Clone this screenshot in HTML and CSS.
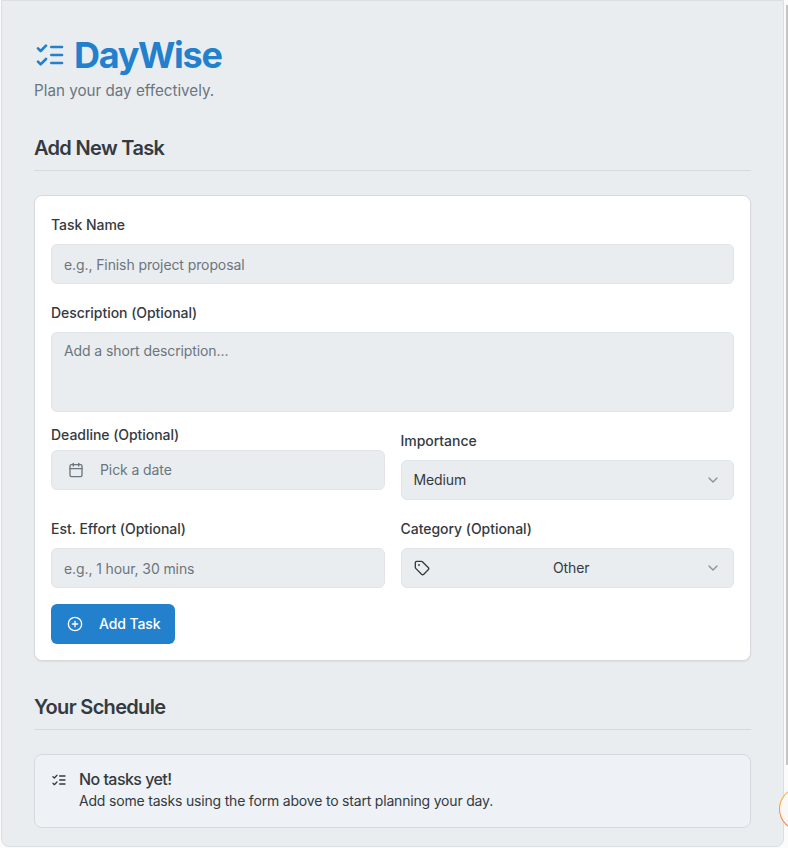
FILE: index.html
```html
<!DOCTYPE html>
<html lang="en">
<head>
<meta charset="utf-8">
<title>DayWise</title>
<link rel="stylesheet" href="styles.css">
</head>
<body>
<div class="frame">
  <main class="app">
    <header class="brand">
      <h1 class="brand-title">
        <svg class="brand-icon" viewBox="0 0 24 24" fill="none" stroke="currentColor" stroke-width="2" stroke-linecap="round" stroke-linejoin="round"><path d="m3 17 2 2 4-4"/><path d="m3 7 2 2 4-4"/><path d="M13 6h8"/><path d="M13 12h8"/><path d="M13 18h8"/></svg>
        DayWise
      </h1>
      <p class="brand-sub">Plan your day effectively.</p>
    </header>

    <h2 class="section-title">Add New Task</h2>
    <form class="card">
      <div class="field">
        <label class="label">Task Name</label>
        <div class="input placeholder">e.g., Finish project proposal</div>
      </div>
      <div class="field spaced">
        <label class="label">Description (Optional)</label>
        <div class="input textarea placeholder">Add a short description...</div>
      </div>
      <div class="row row-first">
        <div class="field deadline">
          <label class="label">Deadline (Optional)</label>
          <div class="input placeholder date">
            <svg class="ico" viewBox="0 0 24 24" fill="none" stroke="currentColor" stroke-width="2" stroke-linecap="round" stroke-linejoin="round"><path d="M8 2v4"/><path d="M16 2v4"/><rect x="3" y="4" width="18" height="18" rx="2"/><path d="M3 10h18"/></svg>
            <span class="lift">Pick a date</span>
          </div>
        </div>
        <div class="field importance">
          <label class="label">Importance</label>
          <div class="input select">
            <span class="lift">Medium</span>
            <svg class="chev" viewBox="0 0 24 24" fill="none" stroke="currentColor" stroke-width="2" stroke-linecap="round" stroke-linejoin="round"><path d="m6 9 6 6 6-6"/></svg>
          </div>
        </div>
      </div>
      <div class="row spaced">
        <div class="field">
          <label class="label">Est. Effort (Optional)</label>
          <div class="input placeholder">e.g., 1 hour, 30 mins</div>
        </div>
        <div class="field">
          <label class="label">Category (Optional)</label>
          <div class="input select">
            <svg class="ico tag" viewBox="0 0 24 24" fill="none" stroke="currentColor" stroke-width="2" stroke-linecap="round" stroke-linejoin="round"><path d="M12.586 2.586A2 2 0 0 0 11.172 2H4a2 2 0 0 0-2 2v7.172a2 2 0 0 0 .586 1.414l8.704 8.704a2.426 2.426 0 0 0 3.42 0l6.58-6.58a2.426 2.426 0 0 0 0-3.42z"/><circle cx="7.5" cy="7.5" r=".5" fill="currentColor"/></svg>
            <span class="grow lift">Other</span>
            <svg class="chev" viewBox="0 0 24 24" fill="none" stroke="currentColor" stroke-width="2" stroke-linecap="round" stroke-linejoin="round"><path d="m6 9 6 6 6-6"/></svg>
          </div>
        </div>
      </div>
      <button class="btn" type="button">
        <svg class="ico" viewBox="0 0 24 24" fill="none" stroke="currentColor" stroke-width="2" stroke-linecap="round" stroke-linejoin="round"><circle cx="12" cy="12" r="10"/><path d="M8 12h8"/><path d="M12 8v8"/></svg>
        <span class="lift">Add Task</span>
      </button>
    </form>

    <h2 class="section-title second">Your Schedule</h2>
    <div class="alert">
      <svg class="alert-icon" viewBox="0 0 24 24" fill="none" stroke="currentColor" stroke-width="2" stroke-linecap="round" stroke-linejoin="round"><path d="m3 17 2 2 4-4"/><path d="m3 7 2 2 4-4"/><path d="M13 6h8"/><path d="M13 12h8"/><path d="M13 18h8"/></svg>
      <div>
        <div class="alert-title">No tasks yet!</div>
        <div class="alert-text">Add some tasks using the form above to start planning your day.</div>
      </div>
    </div>
  </main>
  <aside class="side">
    <span class="scroll-thumb"></span>
    <span class="orb"></span>
  </aside>
</div>
</body>
</html>
```

FILE: styles.css
```css
* { box-sizing: border-box; }
html, body { margin: 0; height: 100%; }
body {
  background: #fbfbfb;
  font-family: Inter, "Liberation Sans", sans-serif;
  color: #343a40;
  overflow: hidden;
}
.frame { display: flex; height: 848px; width: 788px; padding-left: 1px; }
.app {
  width: 783px;
  height: 847px;
  flex: none;
  background: #e9edf0;
  border: 1px solid #dcdfe2;
  border-radius: 0 0 8px 8px;
  padding: 34px 32px 0 32px;
}
.brand-title {
  margin: 0;
  display: flex;
  align-items: center;
  gap: 8px;
  font-size: 36px;
  line-height: 40px;
  font-weight: 700;
  letter-spacing: -1.3px;
  color: #2280cd;
}
.brand-icon { width: 32px; height: 32px; flex: none; }
.brand-sub { margin: 4px 0 0; font-size: 15.2px; line-height: 24px; color: #6c757d; }
.section-title {
  margin: 31px 0 24px;
  padding-bottom: 8px;
  border-bottom: 1px solid #d6dade;
  font-size: 20px;
  line-height: 28px;
  font-weight: 600;
  letter-spacing: -0.68px;
  color: #343a40;
  width: 717px;
}
.section-title.second { margin-top: 32px; }
.card {
  width: 717px;
  background: #fff;
  border: 1px solid #d6dade;
  border-radius: 8px;
  padding: 22px 16px 16px;
  box-shadow: 0 1px 2px rgba(0,0,0,.06);
  display: flex;
  flex-direction: column;
}
.field { display: flex; flex-direction: column; gap: 12px; flex: 1 1 0; min-width: 0; }
.spaced { margin-top: 22px; }
.label { font-size: 14px; line-height: 14px; font-weight: 450; letter-spacing: -0.04px; color: #343a40; }
.input {
  height: 40px;
  background: #e9edf0;
  border: 1px solid #e1e5e9;
  border-radius: 6px;
  padding: 0 12px;
  display: flex;
  align-items: center;
  font-size: 14px;
  letter-spacing: -0.1px;
  color: #343a40;
}
.placeholder { color: #6c757d; }
.textarea { height: 80px; flex: none; align-items: flex-start; padding-top: 8px; line-height: 20px; }
.lift { margin-bottom: 2px; }
.date { padding-left: 16px; gap: 16px; }
.ico { width: 16px; height: 16px; flex: none; }
.row { display: flex; gap: 16px; }
.row-first { margin-top: 16px; }
.deadline { gap: 8px; }
.importance { padding-top: 6px; }
.select { justify-content: space-between; }
.grow { flex: 1; text-align: center; padding-left: 8px; }
.chev { width: 16px; height: 16px; color: #8b9298; flex: none; }
.btn {
  align-self: flex-start;
  margin-top: 16px;
  height: 40px;
  width: 124px;
  background: #2280cd;
  color: #fff;
  border: 0;
  border-radius: 6px;
  font: 450 14px Inter, "Liberation Sans", sans-serif;
  letter-spacing: -0.1px;
  white-space: nowrap;
  display: flex;
  align-items: center;
  gap: 16px;
  padding: 0 16px;
}
.alert {
  width: 717px;
  height: 74px;
  background: #eef1f6;
  border: 1px solid #d6dade;
  border-radius: 8px;
  padding: 16px;
  display: flex;
  gap: 12px;
}
.alert-icon { width: 16px; height: 16px; margin-top: 1px; flex: none; }
.alert-title { font-size: 16px; line-height: 16px; font-weight: 450; letter-spacing: -0.55px; margin-bottom: 4px; }
.alert-text { font-size: 14px; line-height: 20px; letter-spacing: -0.19px; }
.side { width: 4px; position: relative; }
.scroll-thumb { position: absolute; left: 2px; top: 5px; width: 2px; height: 760px; background: #c4c4c4; }
.orb {
  position: absolute; left: -5px; top: 787px; width: 44px; height: 44px;
  border-radius: 50%;
  border: 1.5px solid transparent;
  background: linear-gradient(#fbf8f8, #fbf8f8) padding-box, linear-gradient(#fbc14a, #f5703a) border-box;
}
```
